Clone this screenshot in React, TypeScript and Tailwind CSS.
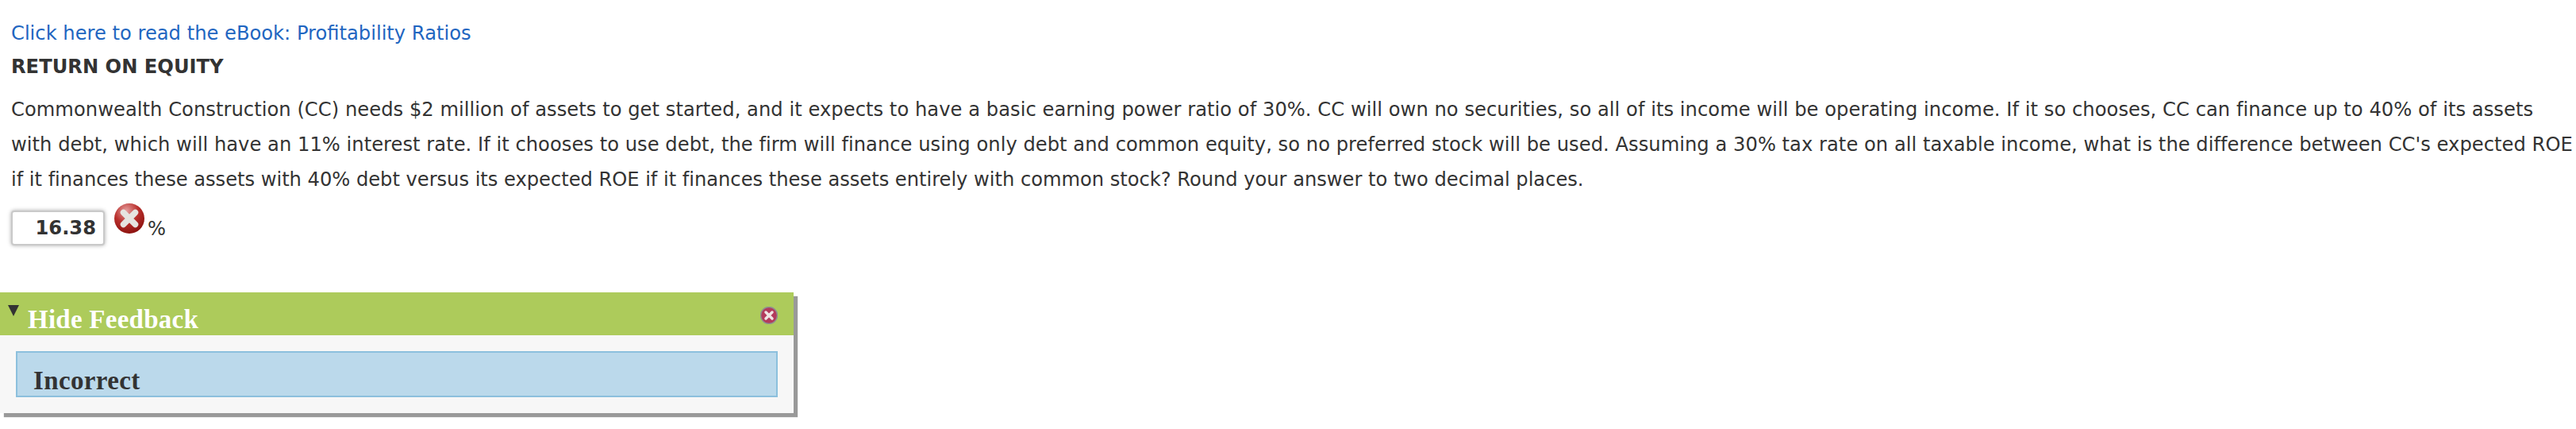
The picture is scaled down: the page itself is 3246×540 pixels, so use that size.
const verdana = '[font-family:"DejaVu_Sans",Verdana,sans-serif]';

function ErrorIcon({ className }: { className: string }) {
  return (
    <svg viewBox="0 0 38 38" className={className}>
      <defs>
        <radialGradient id="errBall" cx="40%" cy="25%" r="80%">
          <stop offset="0%" stopColor="#e6a0a0" />
          <stop offset="50%" stopColor="#b92f2c" />
          <stop offset="100%" stopColor="#870f0c" />
        </radialGradient>
      </defs>
      <circle cx="19" cy="19" r="19" fill="url(#errBall)" />
      <path d="M11.5 11.5 L26.5 26.5 M26.5 11.5 L11.5 26.5" stroke="#e6e4e0" strokeWidth="7.5" strokeLinecap="round" />
    </svg>
  );
}

export default function App() {
  return (
    <div className={`h-[540px] w-[3246px] overflow-hidden bg-white text-[#333] ${verdana}`}>
      <div className="px-[14px] pt-[22px]">
        <a className="block text-[24.2px] leading-[40px] text-[#1f66c1]">Click here to read the eBook: Profitability Ratios</a>
        <h1 className="text-[24.2px] font-bold leading-[44px]">RETURN ON EQUITY</h1>
        <p className="mt-[10px] whitespace-nowrap text-[24.2px] leading-[44px]">
          <span className="tracking-[0.04px]">Commonwealth Construction (CC) needs $2 million of assets to get started, and it expects to have a basic earning power ratio of 30%. CC will own no securities, so all of its income will be operating income. If it so chooses, CC can finance up to 40% of its assets</span><br />
          <span className="tracking-[0.03px]">with debt, which will have an 11% interest rate. If it chooses to use debt, the firm will finance using only debt and common equity, so no preferred stock will be used. Assuming a 30% tax rate on all taxable income, what is the difference between CC's expected ROE</span><br />
          <span className="tracking-[-0.03px]">if it finances these assets with 40% debt versus its expected ROE if it finances these assets entirely with common stock? Round your answer to two decimal places.</span>
        </p>
        <div className="mt-[8px] flex items-start">
          <div className="mt-[9px] flex h-[44px] w-[118px] items-center justify-end rounded-[4px] border-2 border-[#c9c9c9] bg-white pr-[9px] text-[24.2px] font-bold shadow-[0_0_5px_#aaa]">
            16.38
          </div>
          <ErrorIcon className="ml-[12px] h-[38px] w-[38px]" />
          <span className="ml-[4px] mt-[12px] text-[24.2px] leading-[40px]">%</span>
        </div>
      </div>
      <section className="mt-[59px] h-[152px] w-[1000px] bg-[#f7f7f7] shadow-[5px_5px_1px_#999]">
        <header className="relative flex h-[54px] items-end bg-[#adcb5b] pl-[35px] text-white">
          <span className="absolute left-[10px] top-[16px] h-0 w-0 border-x-[7px] border-t-[14px] border-x-transparent border-t-[#333]" />
          <h2 className="font-['Liberation_Serif',Georgia,serif] text-[33px] font-bold leading-[40px] tracking-[0.25px]">Hide Feedback</h2>
          <svg viewBox="0 0 22 22" className="absolute right-[20px] top-[18px] h-[22px] w-[22px]">
            <circle cx="11" cy="11" r="10.5" fill="#b33a5c" stroke="#8f8f8f" strokeWidth="1.5" />
            <path d="M7 7 L15 15 M15 7 L7 15" stroke="#f0e4e4" strokeWidth="3.5" strokeLinecap="round" />
          </svg>
        </header>
        <div className="px-[20px] pt-[20px]">
          <div className="flex h-[58px] items-end border-2 border-[#8cc0dd] bg-[#bbd9eb] pl-[20px]">
            <span className="font-['Liberation_Serif',Georgia,serif] text-[33px] font-bold leading-[38px] tracking-[0.35px]">Incorrect</span>
          </div>
        </div>
      </section>
    </div>
  );
}
